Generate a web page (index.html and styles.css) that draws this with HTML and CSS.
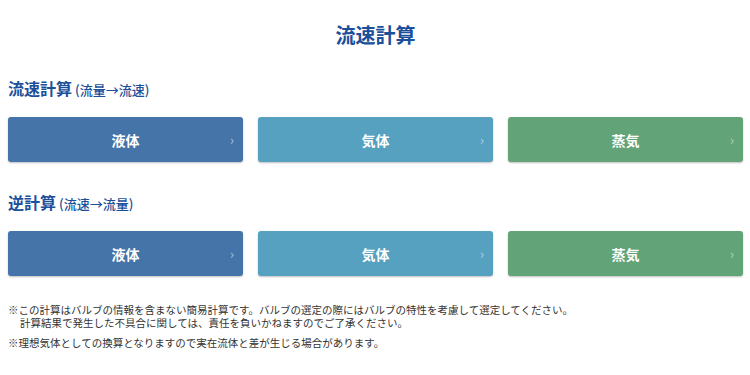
FILE: index.html
```html
<!DOCTYPE html>
<html lang="ja">
<head>
<meta charset="utf-8">
<link rel="stylesheet" href="styles.css">
</head>
<body>
<div class="page">
  <h1 class="title">流速計算</h1>
  <h2 class="section-heading">流速計算<span class="sub">(流量→流速)</span></h2>
  <div class="btn-row">
    <a class="btn liquid">液体<span class="chev">›</span></a>
    <a class="btn gas">気体<span class="chev">›</span></a>
    <a class="btn steam">蒸気<span class="chev">›</span></a>
  </div>
  <h2 class="section-heading second">逆計算<span class="sub">(流速→流量)</span></h2>
  <div class="btn-row">
    <a class="btn liquid">液体<span class="chev">›</span></a>
    <a class="btn gas">気体<span class="chev">›</span></a>
    <a class="btn steam">蒸気<span class="chev">›</span></a>
  </div>
  <div class="notes">
    <div class="note">
      <p class="note-line">※この計算はバルブの情報を含まない簡易計算です。バルブの選定の際にはバルブの特性を考慮して選定してください。</p>
      <p class="note-line indent">計算結果で発生した不具合に関しては、責任を負いかねますのでご了承ください。</p>
    </div>
    <div class="note">
      <p class="note-line">※理想気体としての換算となりますので実在流体と差が生じる場合があります。</p>
    </div>
  </div>
</div>
</body>
</html>
```
FILE: styles.css
```css
* { box-sizing: border-box; }
html, body { margin: 0; padding: 0; background: #fff; }
body {
  font-family: "Noto Sans CJK JP", "Noto Sans", sans-serif;
  color: #333;
}
.page {
  width: 750px;
  padding: 0 7px 0 8px;
}
.title {
  margin: 0;
  padding-top: 20px;
  height: 56px;
  text-align: center;
  font-size: 20px;
  line-height: 30px;
  font-weight: 700;
  color: #1c4f9a;
}
.section-heading {
  margin: 20px 0 0 0;
  height: 41px;
  font-size: 16px;
  line-height: 24px;
  font-weight: 700;
  color: #1c4f9a;
}
.section-heading.second { margin-top: 28px; height: 41px; }
.sub {
  font-size: 13px;
  font-weight: 500;
  margin-left: 3px;
}
.btn-row {
  display: grid;
  grid-template-columns: repeat(3, 235px);
  column-gap: 15px;
}
.btn {
  position: relative;
  display: flex;
  align-items: center;
  justify-content: center;
  height: 45px;
  border-radius: 3px;
  color: #fff;
  font-size: 14px;
  font-weight: 700;
  box-shadow: 0 1px 2px rgba(0,0,0,0.25);
  text-decoration: none;
}
.btn.liquid { background: #4574a8; }
.btn.gas { background: #56a1bf; }
.btn.steam { background: #62a477; }
.chev {
  position: absolute;
  right: 9px;
  top: 50%;
  transform: translateY(-55%);
  font-size: 13px;
  font-weight: 400;
  color: rgba(255,255,255,0.55);
}
.notes { margin-top: 27px; }
.note { margin: 0 0 7px 0; }
.note-line {
  margin: 0;
  font-size: 10.5px;
  line-height: 13px;
  height: 13px;
  color: #333;
  white-space: nowrap;
}
.indent { padding-left: 12px; }
```
